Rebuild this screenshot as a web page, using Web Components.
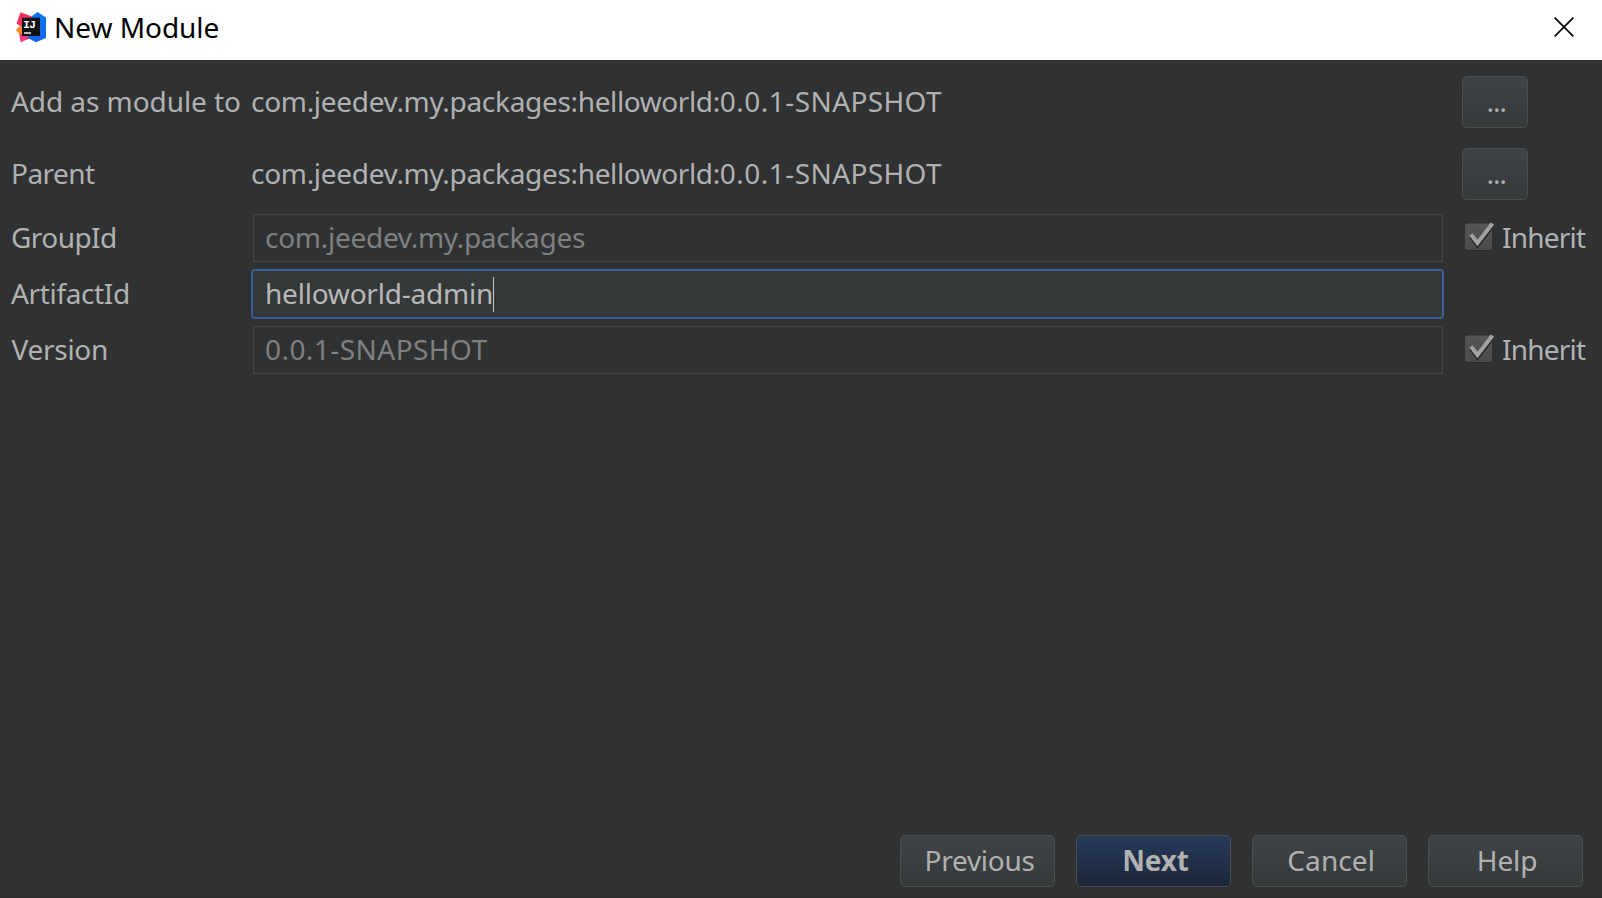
<!DOCTYPE html>
<html lang="en">
<head>
<meta charset="utf-8">
<title>New Module</title>
<style>
html,body{margin:0;height:100%;overflow:hidden}
body{font:28px/36px "Noto Sans","Open Sans",sans-serif;color:#b1b1b1;background:#2f3132}
</style>
</head>
<body>
<module-dialog></module-dialog>
<script>
const define=(name,html,setup)=>customElements.define(name,class extends HTMLElement{
  connectedCallback(){
    if(this.shadowRoot)return;
    const t=document.createElement('template');
    t.innerHTML=html;
    this.attachShadow({mode:'open'}).append(t.content.cloneNode(true));
    if(setup)setup(this,this.shadowRoot);
  }
});
const ctx=document.createElement('canvas').getContext('2d');

/* Label whose visible glyphs span exactly the given width */
define('fit-text','<style>:host{display:block;white-space:pre;line-height:36px;padding-bottom:2px}</style><slot></slot>',el=>{
  const s=el.textContent,w=+el.getAttribute('width'),c=getComputedStyle(el);
  ctx.font=`${c.fontWeight} 28px "Noto Sans"`;
  const m=ctx.measureText(s),ink=m.actualBoundingBoxLeft+m.actualBoundingBoxRight;
  el.style.setProperty('--ls',(w-ink)/(s.length-1)+'px');
  el.style.letterSpacing='var(--ls)';
  el.style.width=w+'px';
  el.style.textIndent=m.actualBoundingBoxLeft+(+el.getAttribute('dx')||0)+'px';
});

define('idea-logo',`<style>:host{display:block;width:32px;height:32px}svg{display:block}</style>
<svg width="32" height="32" viewBox="0 0 32 32">
<defs><linearGradient id="p" x1="0" y1="0" x2=".4" y2="1"><stop stop-color="#f72b63"/><stop offset=".6" stop-color="#fa3158"/><stop offset="1" stop-color="#ee3a8c"/></linearGradient>
<linearGradient id="b" x1="0" y1="0" x2="0" y2="1"><stop stop-color="#0878ee"/><stop offset="1" stop-color="#1562e8"/></linearGradient></defs>
<path d="M5.500 1.300 17 5.500 16 27 5.500 31.300 4 21 6.500 16 1.500 12.500Z" fill="url(#p)"/>
<path d="M1 19 4 15.500 8 16 8 23 4 22.500Z" fill="#f98a20"/>
<path d="M22.500 1 31 6.500V27L21 31.300 13 27 17 5Z" fill="url(#b)"/>
<path d="M7 6.700H25V25H7Z" fill="#101112"/>
<text y="17" x="8.200" font-family="Liberation Mono" font-size="11" font-weight="700" fill="#fff" letter-spacing="-.6">IJ</text>
<path d="M9 22H16" stroke="#fff" stroke-width="1.400"/>
</svg>`);

define('title-bar',`<style>
:host{display:flex;height:60px;background:#fff;color:#000;align-items:flex-start;box-sizing:border-box;padding:0 28px 0 15px}
idea-logo{margin-top:11px}
fit-text{margin:9px auto 0 9px}
svg{margin-top:17px;display:block}
</style><idea-logo></idea-logo><fit-text width="162.500">New Module</fit-text>
<svg width="20" height="20"><path d="M.700.700 19.300 19.300M19.300.700.700 19.300" stroke="#000" stroke-width="1.700"/></svg>`);

define('form-row',`<style>
:host{display:grid;grid-template-columns:240px 1192px 1fr;height:56px;box-sizing:border-box;padding-left:12px;align-items:center}
</style><slot name="label"></slot><slot name="value"></slot><slot name="extra"></slot>`);

define('text-field',`<style>
:host{display:flex;align-items:center;box-sizing:border-box;width:1190px;height:48px;margin-left:1px;border:1px solid #434546;color:#7f8080;padding-left:12px}
:host([focused]){width:1193px;height:50px;margin:-1px 0 0 -1px;border:2px solid #3f608c;border-radius:4px;background:#353939;color:#b8b8b8;padding:1px 0 0 14px;box-shadow:inset 0 0 0 1px #2b3440}
i{display:none;width:1px;height:35px;background:#c8c8c8;margin-left:1px}
:host([focused]) i{display:block}
</style><slot></slot><i></i>`);

define('check-item',`<style>
:host{display:flex;align-items:center;margin-left:20px}
svg{display:block;width:32px;height:34px;flex:none;margin:-4px 7px 0 0}
</style><svg viewBox="0 0 32 34"><defs><linearGradient id="g" x2="0" y2="1"><stop stop-color="#555656"/><stop offset="1" stop-color="#4a4b4b"/></linearGradient></defs>
<rect x="1" y="5" width="27" height="27" rx="2.500" fill="#272829"/><rect x="1" y="4.500" width="27" height="26.500" rx="2.500" fill="url(#g)"/>
<path d="M7 17.500 13.500 26.500 28.500 7" fill="none" stroke="#252626" stroke-width="4"/>
<path d="M7 15.500 13.500 24 28.500 4.500" fill="none" stroke="#a2a2a2" stroke-width="4"/></svg><slot></slot>`);

define('push-button',`<style>
:host{display:flex;box-sizing:border-box;width:155px;height:52px;justify-content:center;border:1px solid #4b4d4f;border-radius:5px;background:linear-gradient(#414446,#353a3b);padding:6px 0 0 4px}
:host([primary]){background:linear-gradient(#263a5a,#1c2639);font-weight:700}
:host([small]){width:66px;margin-left:18px}
</style><slot></slot>`);

define('module-dialog',`<style>
:host{display:flex;flex-direction:column;height:898px;box-sizing:border-box;background:#2f3132;border-bottom:1px solid #28292b}
main{padding-top:14px;flex:1}
footer{display:flex;justify-content:flex-end;gap:21px;padding:0 19px 10px 0}
.a{margin-bottom:16px}
.g{margin-top:-8px}
.p{letter-spacing:calc(var(--ls) - .18px)}
.q{letter-spacing:calc(var(--ls) - .27px)}
.r{letter-spacing:calc(var(--ls) + .6px)}
.s{letter-spacing:calc(var(--ls) + .5px)}
</style>
<title-bar></title-bar>
<main>
<form-row class="a"><fit-text slot="label" width="229" dx="-1">Add as module to</fit-text><fit-text slot="value" width="690"><span class="p">com.jeedev.my.packages:</span><span class="q">helloworld:</span><span class="r">0.0.1-</span><span class="s">SNAPSHOT</span></fit-text><push-button small slot="extra"><fit-text width="17">...</fit-text></push-button></form-row>
<form-row class="a"><fit-text slot="label" width="82" dx="1">Parent</fit-text><fit-text slot="value" width="690"><span class="p">com.jeedev.my.packages:</span><span class="q">helloworld:</span><span class="r">0.0.1-</span><span class="s">SNAPSHOT</span></fit-text><push-button small slot="extra"><fit-text width="17">...</fit-text></push-button></form-row>
<form-row class="g"><fit-text slot="label" width="103">GroupId</fit-text><text-field slot="value"><fit-text width="319">com.jeedev.my.packages</fit-text></text-field><check-item slot="extra"><fit-text width="83">Inherit</fit-text></check-item></form-row>
<form-row><fit-text slot="label" width="117" dx="-1">ArtifactId</fit-text><text-field focused slot="value"><fit-text width="225">helloworld-admin</fit-text></text-field></form-row>
<form-row><fit-text slot="label" width="95.500" dx="-.5">Version</fit-text><text-field slot="value"><fit-text width="221.500">0.0.1-SNAPSHOT</fit-text></text-field><check-item slot="extra"><fit-text width="83">Inherit</fit-text></check-item></form-row>
</main>
<footer>
<push-button><fit-text width="108" dx="1">Previous</fit-text></push-button>
<push-button primary><fit-text width="64.500" dx="1">Next</fit-text></push-button>
<push-button><fit-text width="84.500" dx="-1">Cancel</fit-text></push-button>
<push-button><fit-text width="57.500">Help</fit-text></push-button>
</footer>`);
</script>
</body>
</html>
